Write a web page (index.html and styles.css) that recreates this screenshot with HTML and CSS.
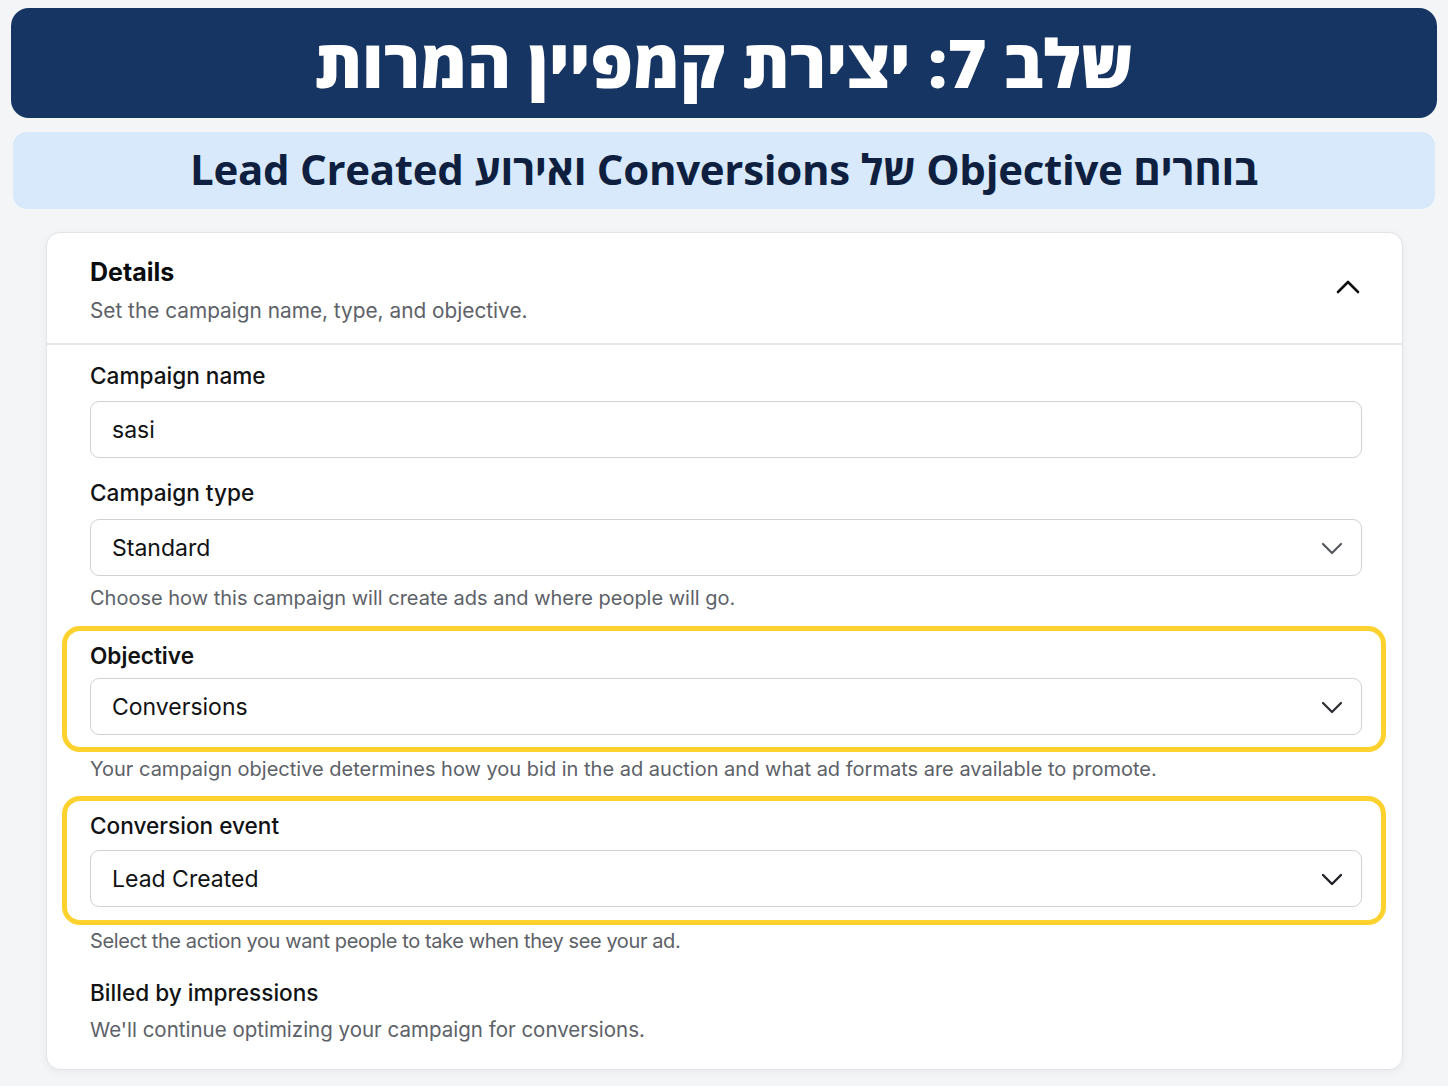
FILE: index.html
```html
<!DOCTYPE html>
<html lang="he">
<head>
<meta charset="utf-8">
<title>שלב 7</title>
<link rel="stylesheet" href="styles.css">
</head>
<body>
<div class="page">
  <header class="banner" dir="rtl">
    <h1 class="banner-title">שלב 7: יצירת קמפיין המרות</h1>
  </header>
  <div class="subbanner" dir="rtl">
    <h2 class="subbanner-title">בוחרים Objective של Conversions ואירוע Lead Created</h2>
  </div>

  <section class="card">
    <div class="card-head">
      <div class="card-head-text">
        <div class="card-title">Details</div>
        <div class="card-sub">Set the campaign name, type, and objective.</div>
      </div>
      <svg class="chev-up" width="24" height="16" viewBox="0 0 24 16"><path d="M2 13 L12 3 L22 13" fill="none" stroke="#111" stroke-width="2.6" stroke-linecap="round" stroke-linejoin="round"/></svg>
    </div>
    <div class="card-body">
      <div class="label">Campaign name</div>
      <div class="field">sasi</div>

      <div class="label label-type">Campaign type</div>
      <div class="field select">
        <span>Standard</span>
        <svg class="chev" width="22" height="14" viewBox="0 0 22 14"><path d="M2 3 L11 12 L20 3" fill="none" stroke="#55585e" stroke-width="2.2" stroke-linecap="round" stroke-linejoin="round"/></svg>
      </div>
      <div class="help help-type">Choose how this campaign will create ads and where people will go.</div>

      <div class="highlight hl-1">
        <div class="label label-strong">Objective</div>
        <div class="field select field-obj">
          <span>Conversions</span>
          <svg class="chev" width="22" height="14" viewBox="0 0 22 14"><path d="M2 3 L11 12 L20 3" fill="none" stroke="#2b2d31" stroke-width="2.2" stroke-linecap="round" stroke-linejoin="round"/></svg>
        </div>
      </div>
      <div class="help help-obj">Your campaign objective determines how you bid in the ad auction and what ad formats are available to promote.</div>

      <div class="highlight hl-2">
        <div class="label label-med">Conversion event</div>
        <div class="field select field-event">
          <span>Lead Created</span>
          <svg class="chev" width="22" height="14" viewBox="0 0 22 14"><path d="M2 3 L11 12 L20 3" fill="none" stroke="#1f2125" stroke-width="2.4" stroke-linecap="round" stroke-linejoin="round"/></svg>
        </div>
      </div>
      <div class="help help-event">Select the action you want people to take when they see your ad.</div>

      <div class="label label-bill">Billed by impressions</div>
      <div class="help help-bill">We'll continue optimizing your campaign for conversions.</div>
    </div>
  </section>
</div>
</body>
</html>
```
FILE: styles.css
```css
* { box-sizing: border-box; }
html, body { margin: 0; padding: 0; }
body {
  background: #f4f5f6;
  font-family: Inter, "Open Sans", "Liberation Sans", sans-serif;
  color: #111214;
}
.page {
  width: 1448px;
  height: 1086px;
  padding: 8px 11px 0 11px;
  overflow: hidden;
}
.banner {
  height: 110px;
  background: #173563;
  border-radius: 18px;
  display: flex;
  align-items: center;
  justify-content: center;
}
.banner-title {
  margin: 0;
  color: #ffffff;
  font-family: "Open Sans", "Liberation Sans", "DejaVu Sans", sans-serif;
  font-weight: 800;
  font-size: 67px;
  line-height: 1;
  font-stretch: 100%;
  padding-bottom: 2px;
}
.subbanner {
  margin: 14px 2px 0 2px;
  height: 77px;
  background: #d8e9fb;
  border-radius: 14px;
  display: flex;
  align-items: center;
  justify-content: center;
}
.subbanner-title {
  margin: 0;
  color: #0e1f3f;
  font-family: "Open Sans", "Liberation Sans", "DejaVu Sans", sans-serif;
  font-weight: 700;
  font-size: 42px;
  line-height: 1;
  letter-spacing: -0.3px;
  padding-bottom: 3px;
}
.card {
  margin: 23px 34px 0 35px;
  background: #ffffff;
  border: 1px solid #e1e3e6;
  border-radius: 14px;
  box-shadow: 0 2px 8px rgba(0,0,0,0.05);
  height: 838px;
}
.card-head {
  display: flex;
  align-items: flex-start;
  justify-content: space-between;
  padding: 24px 42px 18px 43px;
  border-bottom: 2px solid #e6e8eb;
}
.card-title {
  font-size: 25px;
  font-weight: 700;
  line-height: 30px;
  color: #0b0c0e;
}
.card-sub {
  margin-top: 10px;
  font-size: 20.8px;
  line-height: 28px;
  color: #5d6168;
}
.chev-up { margin-top: 22px; }
.card-body {
  padding: 17px 40px 0 43px;
  display: flex;
  flex-direction: column;
}
.label {
  font-size: 22.6px;
  line-height: 28px;
  font-weight: 500;
  color: #111214;
}
.label-strong { font-weight: 600; }
.label-med { font-weight: 500; }
.field {
  margin-top: 11px;
  height: 57px;
  border: 1.5px solid #cfd2d7;
  border-radius: 9px;
  padding: 0 18px 0 21px;
  display: flex;
  align-items: center;
  font-size: 23px;
  color: #111214;
  background: #fff;
}
.select { justify-content: space-between; }
.label-type { margin-top: 21px; }
.label-type + .field { margin-top: 12px; }
.help {
  font-size: 20px;
  line-height: 28px;
  color: #5d6168;
}
.help-type { margin-top: 8px; }
.help-bill { font-size: 20.5px; }
.highlight {
  border: 5px solid #fdd22f;
  border-radius: 18px;
  margin-left: -28px;
  margin-right: -24px;
  padding-left: 23px;
  padding-right: 19px;
}
.hl-1 { margin-top: 14px; padding-top: 11px; padding-bottom: 12px; }
.hl-1 .field { margin-top: 8px; }
.help-obj { margin-top: 3px; }
.hl-2 { margin-top: 13px; padding-top: 11px; padding-bottom: 13px; }
.hl-2 .field { margin-top: 10px; }
.help-event { margin-top: 2px; letter-spacing: -0.4px; }
.label-bill { margin-top: 24px; }
.help-bill { margin-top: 9px; }
.chev { flex: none; }
```
